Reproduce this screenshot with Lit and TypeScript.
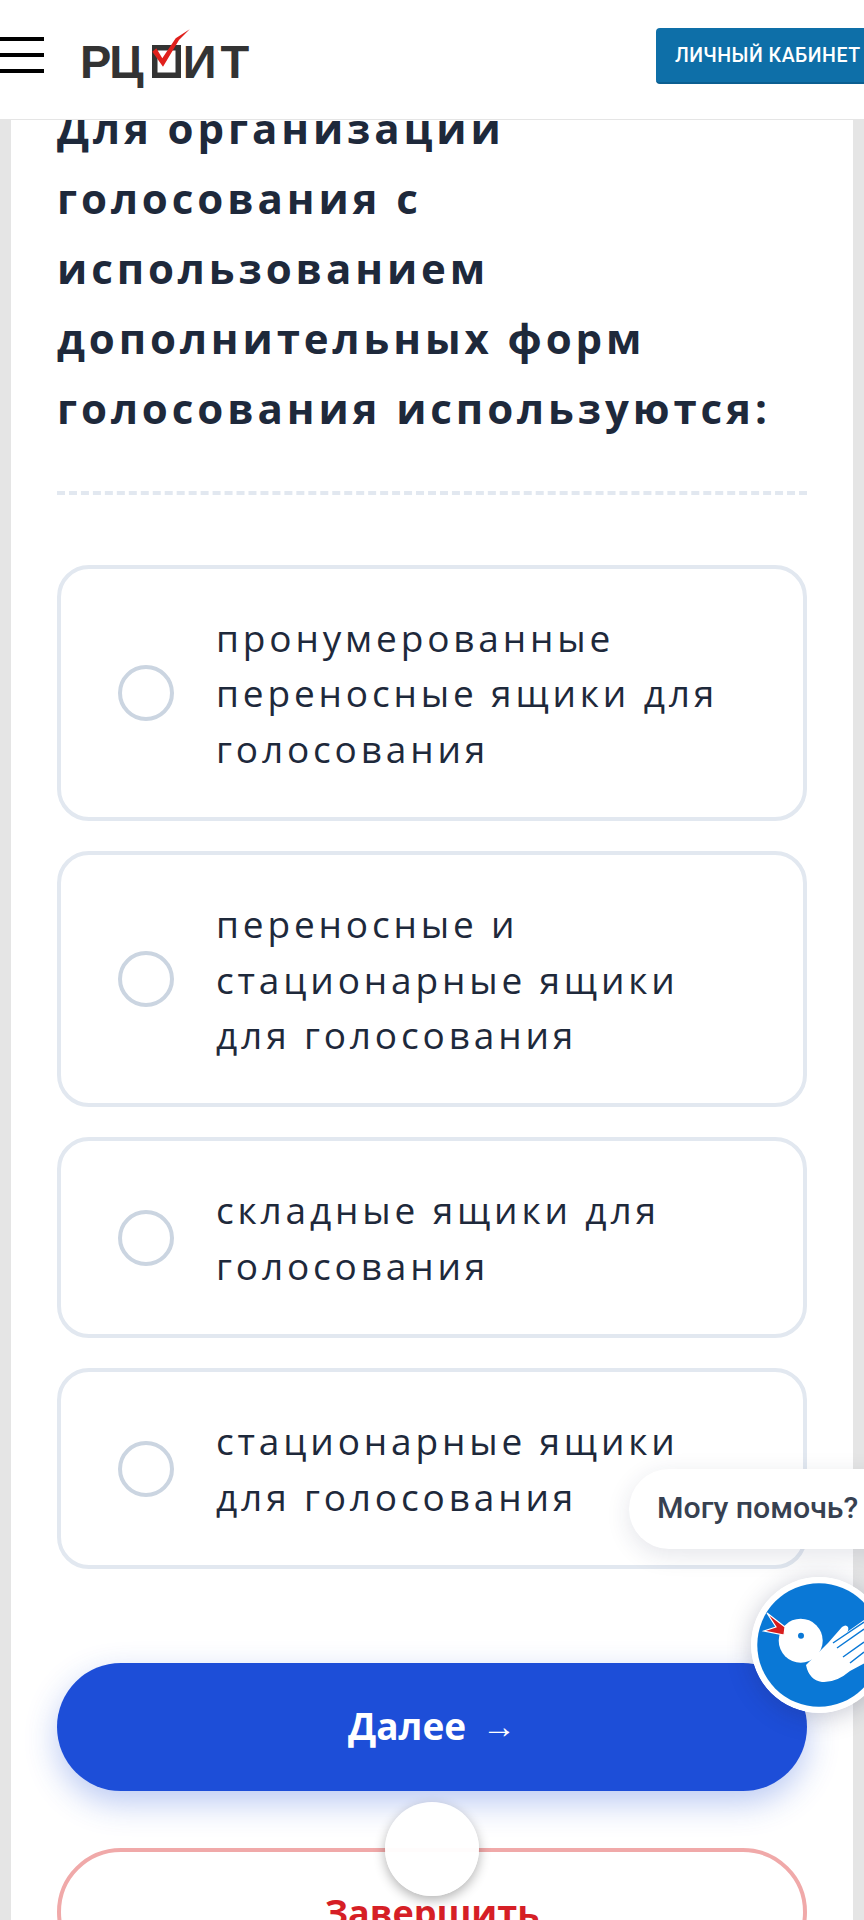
import { html, css, LitElement } from 'lit';
import { customElement } from 'lit/decorators.js';
import { map } from 'lit/directives/map.js';

const OPTIONS: string[][] = [
  ['пронумерованные', 'переносные ящики для', 'голосования'],
  ['переносные и', 'стационарные ящики', 'для голосования'],
  ['складные ящики для', 'голосования'],
  ['стационарные ящики', 'для голосования'],
];

const TITLE = ['Для организации', 'голосования с', 'использованием', 'дополнительных форм', 'голосования используются:'];

@customElement('app-root')
export class AppRoot extends LitElement {
  static styles = css`
    :host {
      display: block;
      position: relative;
      height: 1920px;
      overflow: hidden;
      background: #e5e5e5;
      font-family: 'Open Sans', 'Noto Sans', sans-serif;
      color: #1e293b;
    }

    .header {
      position: absolute;
      top: 0;
      left: 0;
      right: 0;
      height: 119px;
      z-index: 10;
      background: #fff;
      border-bottom: 1px solid #e5e5e5;
      display: flex;
      align-items: center;
      justify-content: space-between;
      overflow: hidden;
    }

    .brand {
      display: flex;
      align-items: center;
      gap: 36px;
    }

    .burger {
      display: flex;
      flex-direction: column;
      gap: 12px;
      width: 44px;
      margin-top: -10px;
    }

    .burger span {
      height: 4px;
      background: #000;
    }

    .logo {
      display: flex;
      align-items: flex-start;
      font-family: 'Liberation Sans', sans-serif;
      font-weight: 700;
      font-size: 47px;
      line-height: 48px;
      color: #333;
      margin-top: 4px;
    }

    .logo svg {
      display: block;
      margin: -10px -7px 0 10px;
    }

    .logo-start {
      letter-spacing: -2px;
    }

    .logo-end {
      letter-spacing: 4px;
    }

    .cabinet {
      width: 240px;
      height: 56px;
      box-sizing: border-box;
      margin-right: -32px;
      margin-top: -7px;
      padding-left: 19px;
      display: flex;
      align-items: center;
      background: #0e6fa8;
      border-bottom: 2px solid #0b5f91;
      border-radius: 4px;
      color: #fff;
      font-family: 'Roboto', sans-serif;
      font-weight: 500;
      font-size: 19.5px;
      letter-spacing: 0.5px;
      white-space: nowrap;
    }

    .card {
      margin: 0 11px;
      height: 1920px;
      box-sizing: border-box;
      background: #fff;
      padding: 93px 46px 0;
    }

    .title {
      margin: 0;
      font-size: 42px;
      font-weight: 700;
      line-height: 70px;
      letter-spacing: 3.9px;
      white-space: nowrap;
    }

    .divider {
      margin: 48px 0 70px;
      border-top: 4px dashed #e2e8f0;
    }

    .options {
      display: flex;
      flex-direction: column;
      gap: 30px;
    }

    .option {
      display: flex;
      align-items: center;
      box-sizing: border-box;
      padding: 41px 0 41px 57px;
      border: 4px solid #e2e8f0;
      border-radius: 32px;
    }

    .radio {
      flex: none;
      width: 56px;
      height: 56px;
      box-sizing: border-box;
      border: 4px solid #cbd5e1;
      border-radius: 50%;
      margin-right: 42px;
    }

    .option-text {
      font-size: 37px;
      line-height: 55.4px;
      letter-spacing: 3.85px;
      white-space: nowrap;
    }

    .next,
    .finish {
      box-sizing: border-box;
      display: flex;
      align-items: center;
      justify-content: center;
      gap: 16px;
      border-radius: 64px;
      font-weight: 700;
    }

    .next {
      height: 128px;
      margin-top: 94px;
      padding-bottom: 4px;
      background: #1d4ed8;
      color: #fff;
      font-size: 37px;
      box-shadow: 0 12px 32px rgba(29, 78, 216, 0.3);
    }

    .arrow {
      font-family: 'Liberation Serif', serif;
      font-weight: 400;
      font-size: 34px;
      margin-top: 4px;
    }

    .finish {
      height: 128px;
      margin-top: 57px;
      background: #fff;
      border: 4px solid #f0a9a9;
      color: #d61f26;
      font-size: 36px;
    }

    .help {
      position: absolute;
      left: 629px;
      top: 1469px;
      width: 280px;
      height: 80px;
      box-sizing: border-box;
      padding: 0 0 4px 28px;
      display: flex;
      align-items: center;
      background: #fff;
      border-radius: 40px;
      box-shadow: 0 6px 24px rgba(30, 41, 80, 0.12);
      font-family: 'Roboto', sans-serif;
      font-weight: 500;
      font-size: 30.3px;
      color: #374151;
      white-space: nowrap;
    }

    .duck {
      position: absolute;
      left: 751px;
      top: 1577px;
      display: block;
      border-radius: 50%;
      box-shadow: 0 4px 24px rgba(30, 41, 80, 0.25);
    }

    .top-btn {
      position: absolute;
      left: 385px;
      top: 1802px;
      width: 94px;
      height: 94px;
      border-radius: 50%;
      background: rgba(255, 255, 255, 0.96);
      box-shadow: 0 4px 12px rgba(0, 0, 0, 0.3);
    }
  `;

  render() {
    return html`
      <header class="header">
        <div class="brand">
          <div class="burger"><span></span><span></span><span></span></div>
          <div class="logo">
            <span class="logo-start">РЦ</span>
            <svg width="38" height="52" viewBox="0 0 38 52">
              <rect x="2.75" y="19.75" width="23.5" height="27.5" fill="none" stroke="#333" stroke-width="5.5" />
              <path d="M0.3 23.7L4.3 20.3 10.3 30.3 23.7 10.3 37.7 1.3 27 12 11 38.7z" fill="#e0201c" />
            </svg>
            <span class="logo-end">ИТ</span>
          </div>
        </div>
        <div class="cabinet">ЛИЧНЫЙ КАБИНЕТ</div>
      </header>

      <main class="card">
        <h1 class="title">${map(TITLE, (line, i) => html`${i > 0 ? html`<br />` : ''}${line}`)}</h1>
        <div class="divider"></div>
        <div class="options">
          ${map(OPTIONS, (lines) => html`
            <div class="option">
              <span class="radio"></span>
              <div class="option-text">${map(lines, (line) => html`<div>${line}</div>`)}</div>
            </div>
          `)}
        </div>
        <div class="next">Далее <span class="arrow">→</span></div>
        <div class="finish">Завершить</div>
      </main>

      <div class="help">Могу помочь?</div>
      <svg class="duck" width="136" height="136" viewBox="0 0 136 136">
        <circle cx="68" cy="68" r="68" fill="#fff" />
        <circle cx="68" cy="68" r="61.7" fill="#0a78d6" />
        <path d="M77 66L91 50Q95 47 97 50 98 53 96 55L113 43H125V80L99 94Q85 106 71 105 58 103 55 88z" fill="#fff" />
        <path d="M82 66L113 45M86 71L113 52M92 80L113 65M99 86L113 75" stroke="#0a78d6" stroke-width="1.5" fill="none" />
        <circle cx="49.7" cy="63.7" r="22" fill="#fff" />
        <circle cx="50" cy="58.7" r="3" fill="#0a78d6" />
        <path d="M16 36L34 50 33 58 13 54 25 50z" fill="#d81e1e" stroke="#fff" stroke-width="1.2" />
      </svg>
      <div class="top-btn"></div>
    `;
  }
}
